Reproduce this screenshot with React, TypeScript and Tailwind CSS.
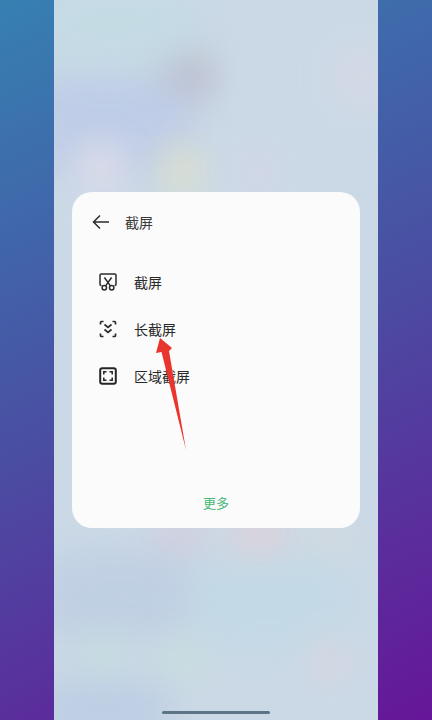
const spots = [
  "left-[100px] top-[45px] w-[60px] h-[60px] bg-[#b8b4c4] opacity-80",
  "left-[280px] top-[45px] w-[55px] h-[65px] bg-[#dcd8e4] opacity-60",
  "left-[-30px] top-[70px] w-[170px] h-[110px] bg-[#bccae8] opacity-80",
  "left-[-20px] top-[-20px] w-[170px] h-[90px] bg-[#c2dce4] opacity-70",
  "left-[22px] top-[140px] w-[50px] h-[55px] bg-[#e2e0ea] opacity-90",
  "left-[108px] top-[145px] w-[36px] h-[50px] bg-[#e4e4c4] opacity-90",
  "left-[180px] top-[150px] w-[45px] h-[45px] bg-[#d8d4e6] opacity-70",
  "left-[100px] top-[525px] w-[50px] h-[30px] bg-[#dcc8d8] opacity-80",
  "left-[180px] top-[520px] w-[50px] h-[35px] bg-[#ecccd0] opacity-80",
  "left-[255px] top-[525px] w-[40px] h-[25px] bg-[#dcdcd4] opacity-80",
  "left-[-20px] top-[550px] w-[170px] h-[90px] bg-[#bccce2] opacity-70",
  "left-[130px] top-[560px] w-[170px] h-[90px] bg-[#c0dae6] opacity-70",
  "left-[30px] top-[635px] w-[40px] h-[50px] bg-[#c4e2da] opacity-70",
  "left-[105px] top-[640px] w-[40px] h-[45px] bg-[#c8e2d8] opacity-80",
  "left-[258px] top-[640px] w-[35px] h-[40px] bg-[#e2d4dc] opacity-70",
  "left-[-20px] top-[680px] w-[140px] h-[60px] bg-[#b8cae4] opacity-70",
];

function Row({ icon, label }: { icon: React.ReactNode; label: string }) {
  return (
    <div className="flex items-center h-[47px] pl-[27px]">
      <span className="w-[18px] h-[18px] flex items-center justify-center">{icon}</span>
      <span className="ml-[17px] text-[14px] leading-[20px] text-[#2a2a2a]">{label}</span>
    </div>
  );
}

const ScissorIcon = (
  <svg width="18" height="18" viewBox="0 0 18 18" fill="none" stroke="#2b2b2b" strokeWidth="1.5">
    <path d="M2.500 12.500H2.200C1.500 12.500 1 12 1 11.300V2.200C1 1.500 1.500 1 2.200 1h13.600c.7 0 1.200.5 1.200 1.200v9.100c0 .7-.5 1.200-1.200 1.200h-.3" />
    <circle cx="5.300" cy="14.700" r="2.200" />
    <circle cx="12.700" cy="14.700" r="2.200" />
    <path d="M6.600 12.900 12.600 4.500M11.400 12.900 5.400 4.500" />
  </svg>
);

const LongIcon = (
  <svg width="18" height="18" viewBox="0 0 18 18" fill="none" stroke="#2b2b2b" strokeWidth="1.700">
    <path d="M1.500 4.500V2.500c0-.6.4-1 1-1h2M13.500 1.500h2c.6 0 1 .4 1 1v2M16.500 13.500v2c0 .6-.4 1-1 1h-2M4.500 16.500h-2c-.6 0-1-.4-1-1v-2" />
    <path d="M5.500 4.500 9 7.500l3.500-3M5.500 9.500 9 12.500l3.500-3" />
  </svg>
);

const AreaIcon = (
  <svg width="18" height="18" viewBox="0 0 18 18" fill="none" stroke="#262626">
    <rect x="1.200" y="1.200" width="15.600" height="15.600" rx="2" strokeWidth="2" />
    <path d="M4.800 7.500V4.800h2.700M10.500 4.800h2.700v2.700M13.200 10.500v2.700h-2.700M7.500 13.200H4.800v-2.700" strokeWidth="1.500" />
  </svg>
);

export default function App() {
  return (
    <div
      className="relative w-[432px] h-[720px] overflow-hidden flex justify-center bg-[linear-gradient(155deg,#3680b2_0%,#4a4ea2_50%,#661698_100%)]"
      style={{ fontFamily: '"Noto Sans CJK SC", "Noto Sans", sans-serif' }}
    >
      <div className="relative w-[324px] h-full bg-[#cbd9e6] overflow-hidden flex flex-col justify-center px-[18px]">
        {spots.map((s) => (
          <div key={s} className={`absolute rounded-full blur-[18px] ${s}`} />
        ))}

        <div className="relative w-[288px] h-[336px] bg-[#fbfbfb] rounded-[20px] flex flex-col">
          <div className="flex items-center h-[62px] mt-[-1px] pl-[20px]">
            <svg width="18" height="16" viewBox="0 0 18 16" fill="none" stroke="#2b2b2b" strokeWidth="1.500">
              <path d="M17 8H1.500M8 1.500 1.500 8 8 14.500" />
            </svg>
            <span className="ml-[15px] text-[14px] leading-[20px] text-[#3a3a3a]">截屏</span>
          </div>
          <div className="mt-[5px] flex flex-col">
            <Row icon={ScissorIcon} label="截屏" />
            <Row icon={LongIcon} label="长截屏" />
            <Row icon={AreaIcon} label="区域截屏" />
          </div>
          <div className="mt-auto h-[35px] text-center text-[13px] leading-[20px] text-[#46b878]">更多</div>
        </div>

        <div className="absolute left-[108px] bottom-[6px] w-[108px] h-[3px] rounded-full bg-[#5d7386]" />
      </div>

      <svg className="absolute left-0 top-0" width="432" height="720" viewBox="0 0 432 720">
        <path d="M160 338 172 348 169 351 186 450 161.500 352 156 353Z" fill="#e8362e" />
      </svg>
    </div>
  );
}
